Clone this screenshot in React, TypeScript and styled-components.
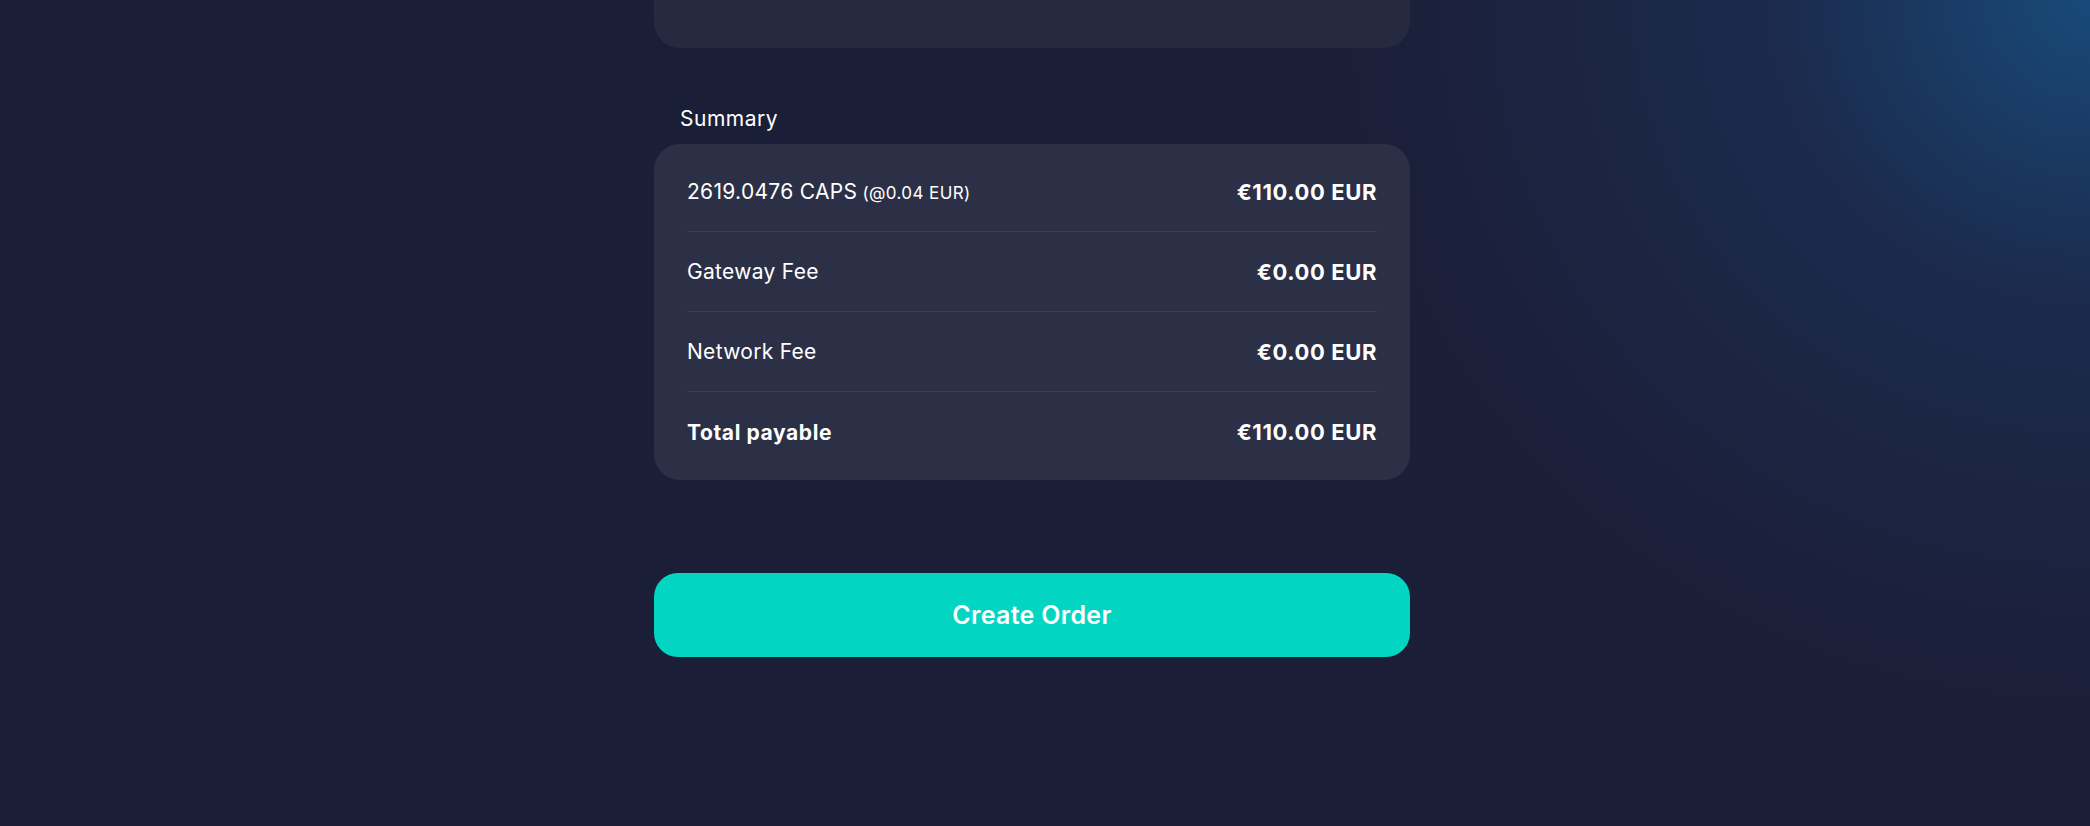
import React from "react";
import styled, { createGlobalStyle } from "styled-components";

const Global = createGlobalStyle`
  html, body {
    margin: 0;
    padding: 0;
    background: #1b1e37;
  }
  body {
    font-family: Inter, "Noto Sans", "Liberation Sans", sans-serif;
    color: #ffffff;
  }
`;

const Page = styled.div`
  width: 2090px;
  height: 826px;
  overflow: hidden;
  background:
    radial-gradient(ellipse 760px 720px at 100% 0%, rgba(24, 78, 128, 0.9) 0%, rgba(27, 56, 100, 0.5) 40%, rgba(27, 30, 55, 0) 100%),
    #1b1e37;
  display: flex;
  justify-content: center;
  padding-right: 26px;
  box-sizing: border-box;
`;

const Column = styled.div`
  width: 756px;
  display: flex;
  flex-direction: column;
`;

const TopCard = styled.div`
  height: 48px;
  background: #252a40;
  border-radius: 0 0 26px 26px;
`;

const SectionLabel = styled.div`
  margin-top: 59px;
  padding-left: 26px;
  font-size: 21px;
  line-height: 24px;
  letter-spacing: 0.5px;
  font-weight: 400;
  color: #ffffff;
`;

const SummaryCard = styled.div`
  margin-top: 13px;
  background: #2c3047;
  border-radius: 26px;
  padding: 8px 33px;
  display: flex;
  flex-direction: column;
`;

const Row = styled.div<{ $last?: boolean }>`
  height: 80px;
  display: flex;
  align-items: center;
  justify-content: space-between;
  border-bottom: ${(p) => (p.$last ? "none" : "1px solid #3b3f56")};
  box-sizing: border-box;
`;

const Label = styled.span<{ $bold?: boolean }>`
  font-size: 21px;
  letter-spacing: ${(p) => (p.$bold ? "0.6px" : "0.3px")};
  font-weight: ${(p) => (p.$bold ? 700 : 400)};
  color: #ffffff;
`;

const Rate = styled.span`
  font-size: 17px;
  letter-spacing: 0.4px;
  font-weight: 400;
`;

const Value = styled.span`
  font-size: 22px;
  letter-spacing: 0.6px;
  font-weight: 700;
  color: #ffffff;
`;

const Button = styled.button`
  margin-top: 93px;
  height: 84px;
  border: none;
  border-radius: 24px;
  background: #02d6c3;
  color: #ffffff;
  font-family: inherit;
  font-size: 25px;
  letter-spacing: 0.3px;
  font-weight: 600;
  cursor: pointer;
`;

const rows = [
  { label: "2619.0476 CAPS", rate: "(@0.04 EUR)", value: "€110.00 EUR" },
  { label: "Gateway Fee", value: "€0.00 EUR" },
  { label: "Network Fee", value: "€0.00 EUR" },
  { label: "Total payable", value: "€110.00 EUR", bold: true },
];

export default function App() {
  return (
    <>
      <Global />
      <Page>
        <Column>
          <TopCard />
          <SectionLabel>Summary</SectionLabel>
          <SummaryCard>
            {rows.map((r, i) => (
              <Row key={r.label} $last={i === rows.length - 1}>
                <Label $bold={r.bold}>
                  {r.label}
                  {r.rate ? <Rate> {r.rate}</Rate> : null}
                </Label>
                <Value>{r.value}</Value>
              </Row>
            ))}
          </SummaryCard>
          <Button>Create Order</Button>
        </Column>
      </Page>
    </>
  );
}
